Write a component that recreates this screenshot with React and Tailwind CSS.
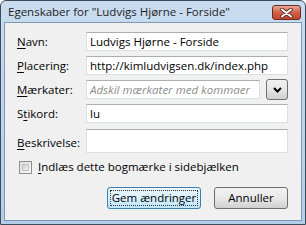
import React from "react";

function Label({ before = "", ak, after }) {
  return (
    <span className="text-[11.5px] text-black whitespace-nowrap">
      {before}
      <span className="underline underline-offset-[2px]">{ak}</span>
      {after}
    </span>
  );
}

const boxCls =
  "h-[19px] border border-[#dbdfe6] border-t-[#abadb3] bg-white px-[3px] text-[11.5px] leading-[17px] whitespace-nowrap overflow-hidden";

export default function App() {
  return (
    <div
      className="w-[306px] h-[225px] flex flex-col rounded-t-[6px] border border-[#3d4d60] bg-gradient-to-b from-[#c9dcf0] to-[#b4cde7] overflow-hidden"
      style={{ fontFamily: '"Open Sans", "Noto Sans", sans-serif' }}
    >
      {/* Title bar */}
      <div className="h-[21px] flex items-center justify-between pl-[7px] pr-[4px]">
        <span className="text-[11.5px] text-[#1e1e1e]">
          Egenskaber for "Ludvigs Hjørne - Forside"
        </span>
        <div className="mt-[2px] w-[29px] h-[15px] rounded-[3px] border border-[#6e2a20] bg-gradient-to-b from-[#e6a596] via-[#d0624b] to-[#c0452c] flex items-center justify-center">
          <svg width="13" height="10" viewBox="0 0 13 10">
            <path d="M2 1.5 L11 8.5 M11 1.5 L2 8.5" stroke="#5a2a20" strokeWidth="3.6" strokeLinecap="round" />
            <path d="M2 1.5 L11 8.5 M11 1.5 L2 8.5" stroke="#ffffff" strokeWidth="2" strokeLinecap="round" />
          </svg>
        </div>
      </div>

      {/* Client area */}
      <div className="flex-1 mx-[3px] mb-[3px] border border-[#7f97b2] bg-[#f0f0f0] pt-[9px] pl-[12px] pr-[13px] flex flex-col">
        <div className="grid grid-cols-[69px_1fr] gap-y-[5px] items-center">
          <Label ak="N" after="avn:" />
          <div className={boxCls + " text-black"}>Ludvigs Hjørne - Forside</div>

          <Label ak="P" after="lacering:" />
          <div className={boxCls + " text-black"}>http://kimludvigsen.dk/index.php</div>

          <Label ak="M" after="ærkater:" />
          <div className="flex items-center gap-[6px]">
            <div className={boxCls + " flex-1 italic text-[#8d8d8d]"}>
              Adskil mærkater med kommaer
            </div>
            <div className="w-[22px] h-[21px] -my-[1px] rounded-[3px] border border-[#707070] bg-gradient-to-b from-[#f2f2f2] via-[#e6e6e6] to-[#cfcfcf] flex items-center justify-center">
              <svg width="9" height="6" viewBox="0 0 9 6">
                <path d="M1 1 L4.5 4.5 L8 1" stroke="#000" strokeWidth="2" fill="none" />
              </svg>
            </div>
          </div>

          <Label before="S" ak="t" after="ikord:" />
          <div className={boxCls + " text-black"}>lu</div>

          <div className="self-start pt-[1px]">
            <Label ak="B" after="eskrivelse:" />
          </div>
          <div className={boxCls + " h-[24px]"}></div>
        </div>

        <div className="flex items-center gap-[6px] mt-[6px] pl-[2px] h-[16px]">
          <div className="w-[13px] h-[13px] border border-[#8e8f8f] bg-gradient-to-br from-[#dcdcdc] to-[#fafafa] p-[2px]">
            <div className="w-full h-full border border-[#c3c3c3] bg-gradient-to-br from-[#cbcbcb] to-[#f4f4f4]" />
          </div>
          <Label ak="I" after="ndlæs dette bogmærke i sidebjælken" />
        </div>

        <div className="flex justify-end gap-[13px] mt-[12px]">
          <div className="w-[94px] h-[22px] rounded-[3px] border border-[#3c7fb1] bg-gradient-to-b from-[#eaf6fd] via-[#d9f0fc] to-[#bee6fd] p-[2px]">
            <div className="w-full h-full border border-dotted border-[#333] flex items-center justify-center text-[11.5px] text-black whitespace-nowrap">
              Gem ændringer
            </div>
          </div>
          <div className="w-[74px] h-[22px] rounded-[3px] border border-[#707070] bg-gradient-to-b from-[#f2f2f2] via-[#e8e8e8] to-[#d0d0d0] flex items-center justify-center text-[11.5px] text-black">
            Annuller
          </div>
        </div>
      </div>
    </div>
  );
}
